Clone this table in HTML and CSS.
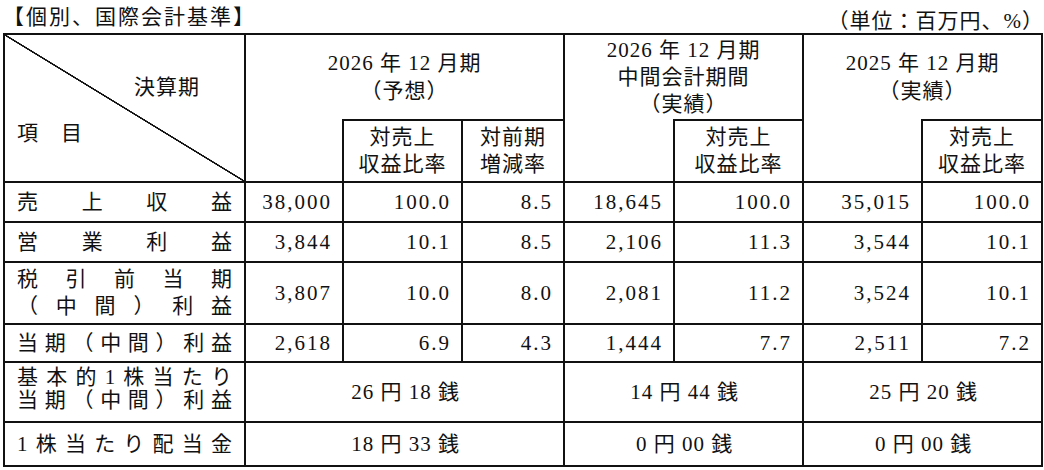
FILE: index.html
```html
<!DOCTYPE html>
<html lang="ja">
<head>
<meta charset="utf-8">
<title>業績予想</title>
<link rel="stylesheet" href="styles.css">
</head>
<body>
<div class="sheet">
  <div class="caption">
    <span class="caption-title">【個別、国際会計基準】</span>
    <span class="caption-unit">（単位：百万円、%）</span>
  </div>
  <table class="results">
    <colgroup>
      <col class="c-label">
      <col class="c-amt1">
      <col class="c-ratio1">
      <col class="c-chg1">
      <col class="c-amt2">
      <col class="c-ratio2">
      <col class="c-amt3">
      <col class="c-ratio3">
    </colgroup>
    <thead>
      <tr class="h1">
        <th rowspan="2" class="diag">
          <div class="diag-period">決算期</div>
          <div class="diag-item">項　目</div>
        </th>
        <th colspan="3" class="period">2026 年 12 月期<br>（予想）</th>
        <th colspan="2" class="period period-mid">2026 年 12 月期<br>中間会計期間<br>（実績）</th>
        <th colspan="2" class="period">2025 年 12 月期<br>（実績）</th>
      </tr>
      <tr class="h2">
        <th class="blank"></th>
        <th class="sub">対売上<br>収益比率</th>
        <th class="sub">対前期<br>増減率</th>
        <th class="blank"></th>
        <th class="sub">対売上<br>収益比率</th>
        <th class="blank"></th>
        <th class="sub">対売上<br>収益比率</th>
      </tr>
    </thead>
    <tbody>
      <tr class="r40">
        <th class="label">売上収益</th>
        <td>38,000</td><td>100.0</td><td>8.5</td>
        <td>18,645</td><td>100.0</td>
        <td>35,015</td><td>100.0</td>
      </tr>
      <tr class="r40">
        <th class="label">営業利益</th>
        <td>3,844</td><td>10.1</td><td>8.5</td>
        <td>2,106</td><td>11.3</td>
        <td>3,544</td><td>10.1</td>
      </tr>
      <tr class="r62">
        <th class="label label-2">税引前当期<br>（中間）利益</th>
        <td>3,807</td><td>10.0</td><td>8.0</td>
        <td>2,081</td><td>11.2</td>
        <td>3,524</td><td>10.1</td>
      </tr>
      <tr class="r38">
        <th class="label">当期（中間）利益</th>
        <td>2,618</td><td>6.9</td><td>4.3</td>
        <td>1,444</td><td>7.7</td>
        <td>2,511</td><td>7.2</td>
      </tr>
      <tr class="r60">
        <th class="label label-eps">基本的1株当たり<br>当期（中間）利益</th>
        <td colspan="3" class="center">26 円 18 銭</td>
        <td colspan="2" class="center">14 円 44 銭</td>
        <td colspan="2" class="center">25 円 20 銭</td>
      </tr>
      <tr class="r44">
        <th class="label">1株当たり配当金</th>
        <td colspan="3" class="center">18 円 33 銭</td>
        <td colspan="2" class="center">0 円 00 銭</td>
        <td colspan="2" class="center">0 円 00 銭</td>
      </tr>
    </tbody>
  </table>
</div>
</body>
</html>
```

FILE: styles.css
```css
html, body {
  margin: 0;
  padding: 0;
  background: #fff;
}

body {
  font-family: "Liberation Serif", "Noto Sans CJK JP", serif;
  font-size: 21px;
  color: #111;
  letter-spacing: 1px;
}

.sheet {
  width: 1038px;
  padding: 0 3px;
}

.caption {
  display: flex;
  justify-content: space-between;
  align-items: flex-end;
  height: 33px;
}

.caption-title {
  line-height: 28px;
  padding-bottom: 2px;
  letter-spacing: 2px;
}

.caption-unit {
  line-height: 24px;
  letter-spacing: 1px;
  margin-right: -3px;
}

.results {
  width: 1038px;
  border-collapse: collapse;
  table-layout: fixed;
}

.c-label { width: 241px; }
.c-amt1 { width: 98px; }
.c-ratio1 { width: 119px; }
.c-chg1 { width: 102px; }
.c-amt2 { width: 110px; }
.c-ratio2 { width: 129px; }
.c-amt3 { width: 119px; }
.c-ratio3 { width: 120px; }

.results th,
.results td {
  border: 2px solid #111;
  padding: 0 12px;
  font-weight: normal;
  white-space: nowrap;
}

.results td {
  text-align: right;
  line-height: 26px;
  letter-spacing: 2px;
  padding-right: 10px;
}

.results .center {
  text-align: center;
  letter-spacing: 1px;
}

.h1 { height: 86px; }
.h2 { height: 62px; }
.r40 { height: 40px; }
.r62 { height: 62px; }
.r38 { height: 38px; }
.r60 { height: 60px; }
.r44 { height: 44px; }

.results .period {
  border-bottom: none;
  text-align: center;
  line-height: 28px;
  vertical-align: middle;
}

.results .period-mid {
  line-height: 27px;
}

.results .blank {
  border-top: none;
}

.results .sub {
  text-align: center;
  line-height: 27px;
  vertical-align: middle;
}

.results .diag {
  vertical-align: top;
  padding: 38px 0 0 0;
  background: linear-gradient(to top right,
    transparent calc(50% - 1px),
    #111 calc(50% - 0.6px),
    #111 calc(50% + 0.6px),
    transparent calc(50% + 1px));
  line-height: 28px;
}

.diag-period {
  text-align: right;
  padding-right: 44px;
}

.diag-item {
  text-align: left;
  padding-left: 12px;
  margin-top: 18px;
}

.results .label {
  text-align: justify;
  text-align-last: justify;
  padding: 0 11px 0 12px;
  line-height: 26px;
  vertical-align: middle;
}

.results .label-2 {
  line-height: 27px;
}

.results .label-eps {
  vertical-align: top;
  line-height: 23px;
  padding-top: 3px;
}
```
